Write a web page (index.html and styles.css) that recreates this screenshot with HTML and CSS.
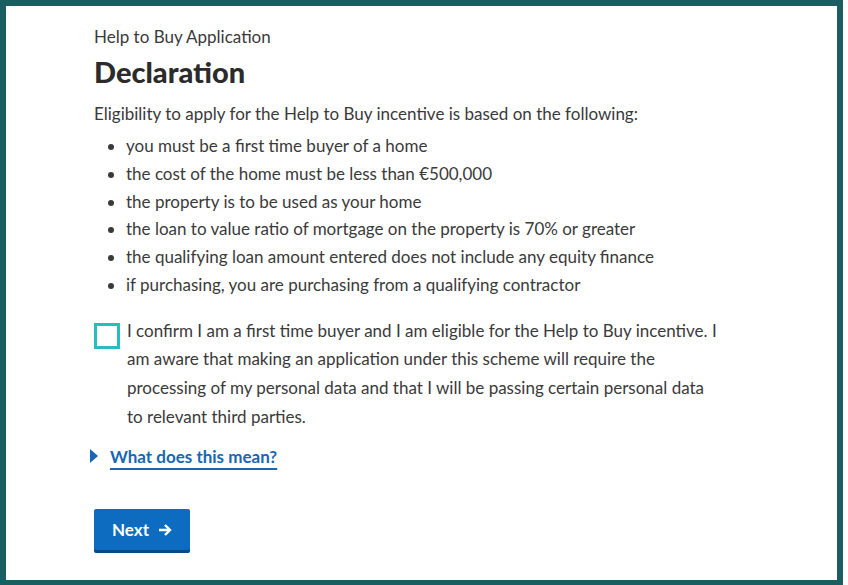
FILE: index.html
```html
<!DOCTYPE html>
<html lang="en">
  <head>
    <meta charset="UTF-8" />
    <meta name="viewport" content="width=device-width, initial-scale=1.0" />
    <title>Help to Buy - Declaration</title>
    <link rel="stylesheet" href="styles.css">
  </head>
  <body>
    <div class="frame">
      <div class="content">
        <span class="caption">Help to Buy Application</span>
        <h1>Declaration</h1>
        <p>Eligibility to apply for the Help to Buy incentive is based on the following:</p>
        <ul class="rules">
          <li>you must be a first time buyer of a home</li>
          <li>the cost of the home must be less than €500,000</li>
          <li>the property is to be used as your home</li>
          <li>the loan to value ratio of mortgage on the property is 70% or greater</li>
          <li>the qualifying loan amount entered does not include any equity finance</li>
          <li>if purchasing, you are purchasing from a qualifying contractor</li>
        </ul>
        <label class="confirm">
          <input type="checkbox" />
          <span class="box"></span>
          <span class="confirm-text">I confirm I am a first time buyer and I am eligible for the Help to Buy incentive. I am aware that making an application under this scheme will require the processing of my personal data and that I will be passing certain personal data to relevant third parties.</span>
        </label>
        <details class="more">
          <summary><span class="link">What does this mean?</span></summary>
        </details>
        <button class="next">
          Next
          <svg class="arrow" width="14" height="14" viewBox="0 0 14 14">
            <path d="M1 7h11M7 2l5 5-5 5" fill="none" stroke="#fff" stroke-width="2.4" />
          </svg>
        </button>
      </div>
    </div>
  </body>
</html>
```

FILE: styles.css
```css
html,
body {
  margin: 0;
  height: 100%;
}

body {
  font-family: Lato, "Noto Sans", sans-serif;
  color: #3a3a3a;
  background: #fff;
}

.frame {
  box-sizing: border-box;
  width: 843px;
  height: 585px;
  border: 6px solid #1a5e62;
  border-bottom-width: 5px;
  background: #fff;
}

.content {
  padding: 21px 0 0 88px;
  width: 660px;
}

.caption {
  display: block;
  font-size: 17px;
  line-height: 20px;
}

h1 {
  font-size: 29px;
  font-weight: 900;
  line-height: 34px;
  margin: 8px 0 14px;
  color: #2b2b2b;
}

p {
  font-size: 17px;
  line-height: 22px;
  margin: 0 0 7px;
}

.rules {
  margin: 0 0 18px;
  padding-left: 32px;
  font-size: 17px;
  line-height: 27.8px;
}

.confirm {
  display: flex;
  align-items: flex-start;
  gap: 7px;
  font-size: 17px;
  line-height: 28.7px;
  cursor: pointer;
}

.confirm input {
  display: none;
}

.box {
  flex: none;
  box-sizing: border-box;
  width: 26px;
  height: 26px;
  margin-top: 6px;
  border: 3px solid #27bdbf;
}

.confirm-text {
  width: 594px;
}

.more {
  margin-top: 13px;
}

.more summary {
  display: flex;
  align-items: center;
  list-style: none;
  font-size: 17px;
  font-weight: 700;
  line-height: 24px;
  color: #1767b2;
  cursor: pointer;
}

.more summary::-webkit-details-marker {
  display: none;
}

.more summary::before {
  content: "";
  width: 0;
  height: 0;
  margin: 0 12px 0 -4px;
  border-top: 7px solid transparent;
  border-bottom: 7px solid transparent;
  border-left: 8px solid #1767b2;
  position: relative;
  top: -1px;
}

.link {
  text-decoration: underline;
  text-underline-offset: 5px;
  text-decoration-thickness: 2px;
}

.next {
  display: flex;
  align-items: center;
  gap: 9px;
  margin-top: 40px;
  padding: 9px 18px 8px;
  background: #0d6cc0;
  border: none;
  border-radius: 2px;
  box-shadow: 0 3px 0 #0b4a80;
  color: #fff;
  font-family: inherit;
  font-size: 17px;
  font-weight: 700;
  line-height: 24px;
  cursor: pointer;
}
```
